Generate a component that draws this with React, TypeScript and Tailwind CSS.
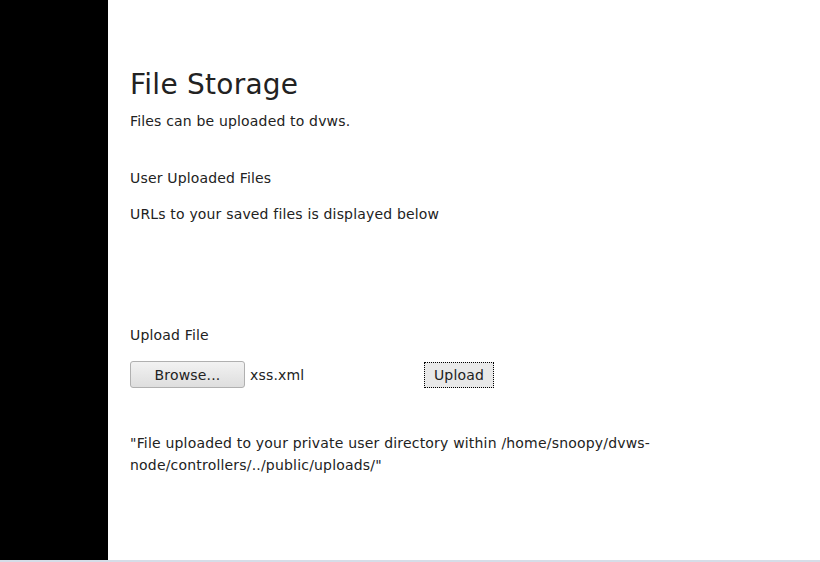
import React from "react";

export default function App() {
  return (
    <div
      className="w-[820px] h-[562px] flex flex-col bg-white text-[#222] overflow-hidden"
      style={{ fontFamily: '"DejaVu Sans", sans-serif' }}
    >
      <div className="flex flex-1">
        {/* Sidebar */}
        <div className="w-[108px] bg-black shrink-0" />

        {/* Main content */}
        <div className="flex-1 pl-[22px] pt-[68px] tracking-[0.17px]">
          <h1 className="text-[28px] leading-[34px] font-normal tracking-[0.25px]">File Storage</h1>
          <p className="mt-[9px] text-[14px] leading-[20px]">Files can be uploaded to dvws.</p>

          <p className="mt-[37px] text-[14px] leading-[20px]">User Uploaded Files</p>
          <p className="mt-[16px] text-[14px] leading-[20px]">URLs to your saved files is displayed below</p>

          <p className="mt-[101px] text-[14px] leading-[20px]">Upload File</p>

          <div className="mt-[16px] flex items-start">
            <button className="w-[115px] h-[27px] pt-[2px] rounded-[3px] border border-[#b0b0b0] bg-gradient-to-b from-[#f2f2f2] to-[#dedede] text-[14px] text-[#222] tracking-[0.17px]">
              Browse...
            </button>
            <span className="ml-[5px] w-[174px] text-[14px] leading-[28px]">xss.xml</span>
            <button className="mt-[1px] w-[70px] h-[26px] pt-[1px] border border-dotted border-black bg-[#e9e9e9] text-[14px] text-[#222] tracking-[0.17px]">
              Upload
            </button>
          </div>

          <p className="mt-[43px] w-[540px] text-[14px] leading-[22px] tracking-[0.19px]">
            "File uploaded to your private user directory within /home/snoopy/dvws-node/controllers/../public/uploads/"
          </p>
        </div>
      </div>
      <div className="h-[2px] bg-[#d6dde8]" />
    </div>
  );
}
